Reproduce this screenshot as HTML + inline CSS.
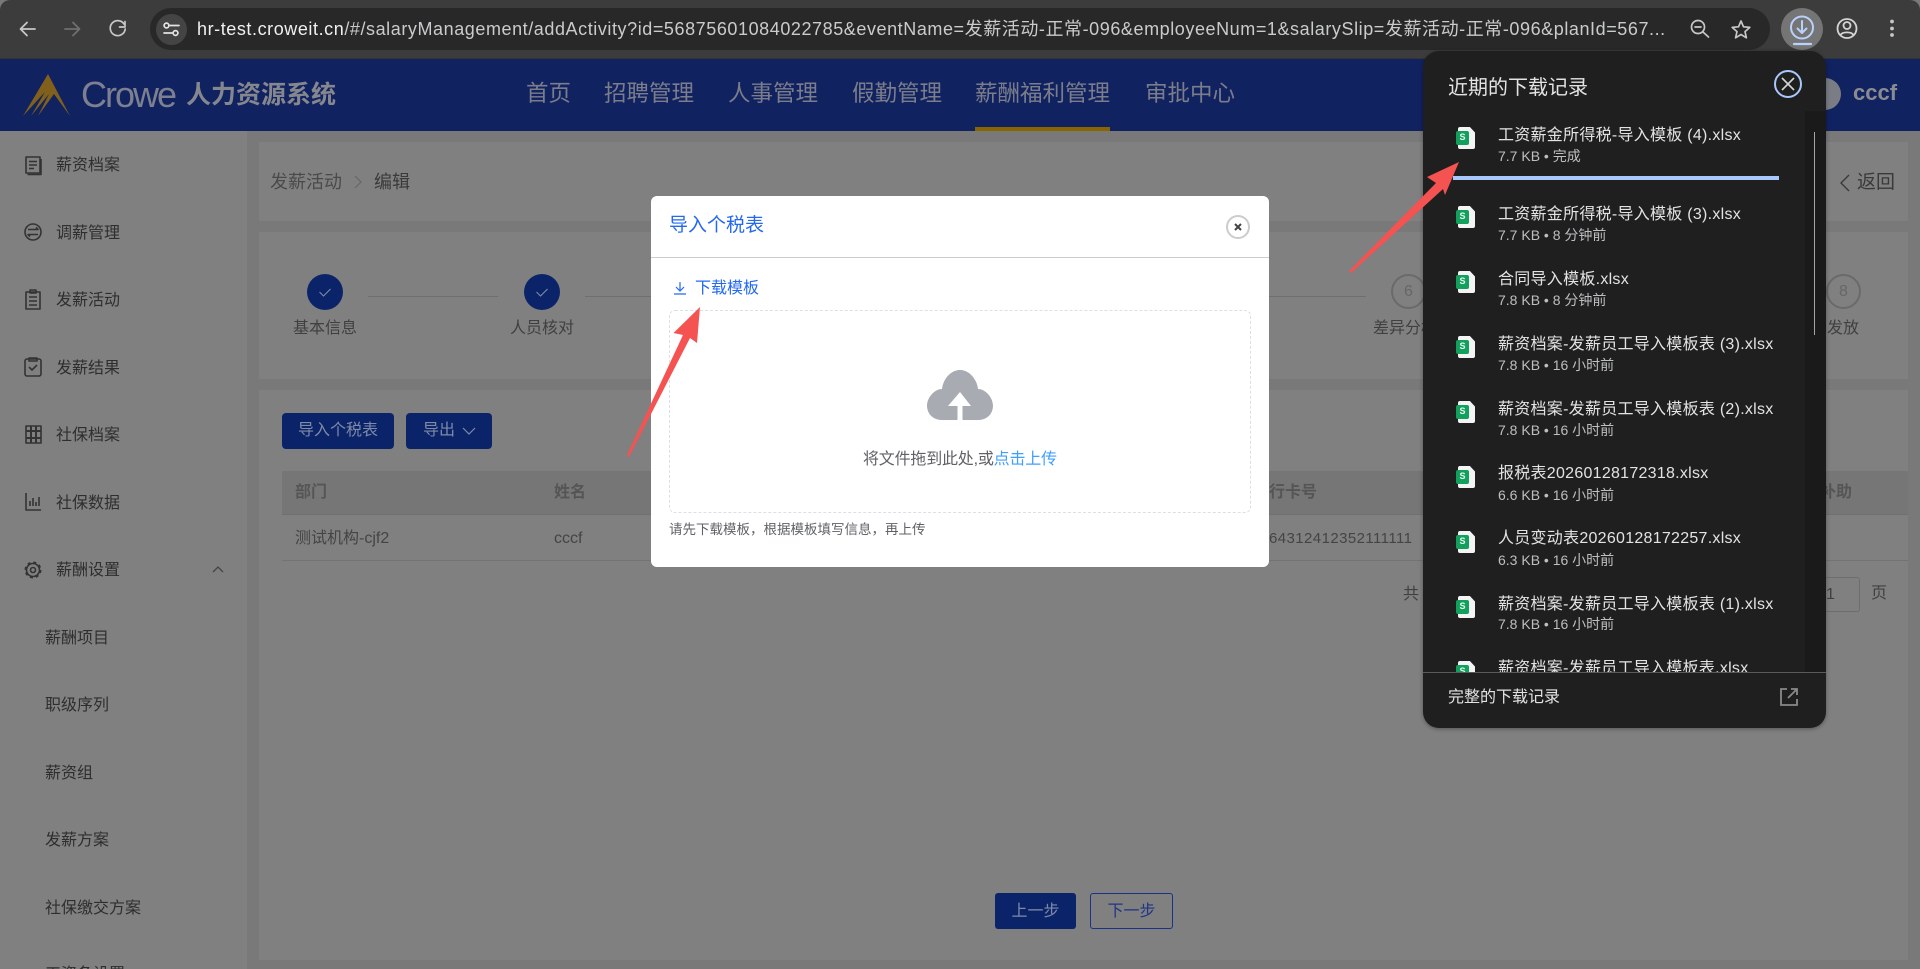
<!DOCTYPE html>
<html lang="zh-CN"><head><meta charset="utf-8"><title>发薪活动</title>
<style>
*{box-sizing:border-box;margin:0;padding:0}
html,body{width:1920px;height:969px;overflow:hidden;background:#797979;font-family:"Liberation Sans","Noto Sans CJK SC",sans-serif}
#root{position:absolute;left:0;top:0;width:1920px;height:969px;overflow:hidden;background:#797979}
.a{position:absolute}
.t{position:absolute;white-space:nowrap;line-height:24px;font-size:16px}
svg{position:absolute;display:block;overflow:visible}
.side{color:#2e2e2e}
.nav{color:#7b7d8b;font-size:22.5px;top:82px}
.card{position:absolute;background:#808080}
.dk{color:#404040}
.dl{color:#e3e3e3;font-size:16px;letter-spacing:.27px}
.ds{color:#bdbfc0;font-size:14px}
.doc{position:absolute;width:17px;height:22px;background:#f4f4f4;border-radius:2px;clip-path:polygon(0 0,70% 0,100% 25%,100% 100%,0 100%)}
.xl{position:absolute;width:13px;height:14px;background:#12a05c;border-radius:2px;color:#e8fff2;font-size:9px;font-weight:700;line-height:13px;text-align:center}
</style></head><body><div id="root">
<!-- toolbar -->
<div class="a" style="left:0;top:0;width:1920px;height:59px;background:#3c3c3c;border-bottom:1px solid #333;border-radius:10px 10px 0 0"></div>
<div class="a" style="left:150px;top:8px;width:1620px;height:42px;background:#282828;border-radius:21px"></div>
<div class="a" style="left:156px;top:14px;width:31px;height:31px;background:#444;border-radius:50%"></div>
<svg style="left:0;top:0" width="240" height="59" fill="none" stroke-linecap="round" stroke-linejoin="round">
<path d="M35 29H21M27 22.500l-6.500 6.500 6.500 6.500" stroke="#c7c7c7" stroke-width="1.800"/>
<path d="M65 29h14M73 22.500l6.500 6.500-6.500 6.500" stroke="#6f6f6f" stroke-width="1.800"/>
<path d="M124 24a7.500 7.500 0 1 0 1.200 5" stroke="#c7c7c7" stroke-width="1.700"/><path d="M125 21.500v5.500h-5.500" stroke="#c7c7c7" stroke-width="1.700"/>
<g stroke="#e3e3e3" stroke-width="1.700"><path d="M170 25.500h9M164 33h8"/><circle cx="166.500" cy="25.500" r="2.400"/><circle cx="175.500" cy="33" r="2.400"/></g>
</svg>
<div class="t" style="left:197px;top:14px;font-size:18px;letter-spacing:.57px;line-height:30px;color:#c9cbcc"><span style="color:#eef0f1">hr-test.croweit.cn</span>/#/salaryManagement/addActivity?id=56875601084022785&amp;eventName=发薪活动-正常-096&amp;employeeNum=1&amp;salarySlip=发薪活动-正常-096&amp;planId=567...</div>
<svg style="left:1680px;top:0" width="240" height="59" fill="none" stroke-linecap="round" stroke-linejoin="round">
<g stroke="#c7c7c7" stroke-width="1.700"><circle cx="18" cy="27" r="6.500"/><path d="M23 32l5.500 5M15 27h6"/></g>
<path d="M61 21l2.500 5.800 6.300.6-4.800 4.200 1.400 6.200-5.400-3.300-5.400 3.300 1.400-6.200-4.800-4.200 6.300-.6z" stroke="#c7c7c7" stroke-width="1.700"/>
<circle cx="122" cy="29" r="21" fill="#757575" stroke="none"/>
<circle cx="122" cy="27.500" r="11" stroke="#b9d2fb" stroke-width="2"/><path d="M122 21v12M117.500 28.500l4.500 4.500 4.500-4.500" stroke="#b9d2fb" stroke-width="2"/><path d="M114 44h17" stroke="#b9d2fb" stroke-width="2.200"/>
<g stroke="#d5d5d5" stroke-width="1.800"><circle cx="167" cy="28.500" r="9.500"/><circle cx="167" cy="25.500" r="3.500"/><path d="M160.500 35c2-3.500 11-3.500 13 0"/></g>
<g fill="#c7c7c7" stroke="none"><circle cx="212" cy="21.500" r="1.900"/><circle cx="212" cy="28.500" r="1.900"/><circle cx="212" cy="35" r="1.900"/></g>
</svg>
<!-- header -->
<div class="a" style="left:0;top:59px;width:1920px;height:72px;background:#112260"></div>
<svg style="left:23px;top:73px" width="48" height="44"><path d="M25 1L47 43 31 21 15 43 26 21 8 43 22 19 0 43z" fill="#80601a"/></svg>
<div class="t" style="left:81px;top:73px;font-size:36px;line-height:44px;color:#7d8090;letter-spacing:-2px">Crowe</div>
<div class="t" style="left:186px;top:80px;font-size:25px;line-height:30px;font-weight:700;color:#85878f">人力资源系统</div>
<div class="t nav" style="left:526px">首页</div>
<div class="t nav" style="left:604px">招聘管理</div>
<div class="t nav" style="left:728px">人事管理</div>
<div class="t nav" style="left:852px">假勤管理</div>
<div class="t nav" style="left:975px">薪酬福利管理</div>
<div class="t nav" style="left:1145px">审批中心</div>
<div class="a" style="left:975px;top:127px;width:135px;height:4px;background:#8a6400"></div>
<div class="a" style="left:1809px;top:78px;width:32px;height:32px;border-radius:50%;background:#7b7d85"></div>
<div class="t" style="left:1853px;top:81px;font-size:22px;font-weight:700;color:#8a8b90">cccf</div>
<!-- sidebar -->
<div class="a" style="left:0;top:131px;width:247px;height:838px;background:#808080"></div>
<svg style="left:0;top:131px" width="60" height="460" fill="none" stroke="#333" stroke-width="1.600" stroke-linejoin="round">
<rect x="26" y="26" width="14" height="16"/><path d="M29 30.500h8M29 34h8M29 37.500h5M41 28v15.500H27.500"/>
<circle cx="33" cy="101" r="8"/><path d="M28 98.500h10l-2-2M38 103.500H28l2 2"/>
<rect x="26" y="161" width="14" height="17"/><path d="M30 159h6v3h-6zM29 166h8M29 170h8M29 174h8"/>
<rect x="25" y="228" width="16" height="17" rx="2"/><path d="M29 227h8v3h-8zM29 236l3 3 5-5"/>
<rect x="26" y="295" width="15" height="17"/><path d="M31 295v17M36 295v17M26 300h15M26 307h15" stroke-width="2"/>
<path d="M26 362v17h15M30 375v-5M33 375v-8M36 375v-4M39 375v-9"/>
<circle cx="33" cy="439" r="6.500"/><circle cx="33" cy="439" r="7.500" stroke-width="2" stroke-dasharray="3 2.900"/><circle cx="33" cy="439" r="2.500"/>
</svg>
<div class="t side" style="left:56px;top:154px">薪资档案</div>
<div class="t side" style="left:56px;top:222px">调薪管理</div>
<div class="t side" style="left:56px;top:289px">发薪活动</div>
<div class="t side" style="left:56px;top:357px">发薪结果</div>
<div class="t side" style="left:56px;top:424px">社保档案</div>
<div class="t side" style="left:56px;top:492px">社保数据</div>
<div class="t side" style="left:56px;top:559px">薪酬设置</div>
<svg style="left:210px;top:562px" width="16" height="16" fill="none" stroke="#444" stroke-width="1.300"><path d="M3 10l5-5 5 5"/></svg>
<div class="t side" style="left:45px;top:627px">薪酬项目</div>
<div class="t side" style="left:45px;top:694px">职级序列</div>
<div class="t side" style="left:45px;top:762px">薪资组</div>
<div class="t side" style="left:45px;top:829px">发薪方案</div>
<div class="t side" style="left:45px;top:897px">社保缴交方案</div>
<div class="t side" style="left:45px;top:963px">工资条设置</div>
<!-- content cards -->
<div class="card" style="left:259px;top:142px;width:1649px;height:79px"></div>
<div class="card" style="left:259px;top:232px;width:1649px;height:147px"></div>
<div class="card" style="left:259px;top:390px;width:1649px;height:570px"></div>
<div class="t" style="left:270px;top:170px;font-size:18px;color:#4a4a4a">发薪活动</div>
<svg style="left:352px;top:174px" width="12" height="16" fill="none" stroke="#666" stroke-width="1.200"><path d="M3 2l6 6-6 6"/></svg>
<div class="t" style="left:374px;top:170px;font-size:18px;color:#3a3a3a">编辑</div>
<svg style="left:1838px;top:172px" width="14" height="22" fill="none" stroke="#3a3a3a" stroke-width="1.400"><path d="M11 3l-8 8 8 8"/></svg>
<div class="t" style="left:1857px;top:171px;font-size:19px;color:#3a3a3a">返回</div>
<!-- stepper -->
<div class="a" style="left:368px;top:296px;width:130px;height:1px;background:#6f6f6f"></div>
<div class="a" style="left:585px;top:296px;width:781px;height:1px;background:#6f6f6f"></div>
<svg style="left:300px;top:270px" width="300" height="44" fill="none"><circle cx="25" cy="22" r="18" fill="#0b2469"/><path d="M19.500 22l4 4 7-7" stroke="#7f8aa8" stroke-width="1.100"/><circle cx="242" cy="22" r="18" fill="#0b2469"/><path d="M236.500 22l4 4 7-7" stroke="#7f8aa8" stroke-width="1.100"/></svg>
<div class="t dk" style="left:293px;top:317px">基本信息</div>
<div class="t dk" style="left:510px;top:317px">人员核对</div>
<div class="a" style="left:1391px;top:274px;width:35px;height:35px;border:2px solid #6a6a6a;border-radius:50%;color:#666;font-size:16px;line-height:31px;text-align:center">6</div>
<div class="t dk" style="left:1373px;top:317px">差异分析</div>
<div class="a" style="left:1826px;top:274px;width:35px;height:35px;border:2px solid #6a6a6a;border-radius:50%;color:#666;font-size:16px;line-height:31px;text-align:center">8</div>
<div class="t dk" style="left:1827px;top:317px">发放</div>
<!-- table area -->
<div class="a" style="left:282px;top:413px;width:112px;height:36px;background:#0b2469;border-radius:4px;color:#7f8aa8;font-size:16px;line-height:36px;text-align:center">导入个税表</div>
<div class="a" style="left:406px;top:413px;width:86px;height:36px;background:#0b2469;border-radius:4px;color:#7f8aa8;font-size:16px;line-height:36px;padding-left:17px">导出</div>
<svg style="left:461px;top:423px" width="16" height="16" fill="none" stroke="#7f8aa8" stroke-width="1.200"><path d="M2 5l6 6 6-6"/></svg>
<div class="a" style="left:282px;top:471px;width:1626px;height:44px;background:#767676;border-bottom:1px solid #707070"></div>
<div class="t" style="left:295px;top:481px;font-weight:700;color:#555;font-size:16px">部门</div>
<div class="t" style="left:554px;top:481px;font-weight:700;color:#555">姓名</div>
<div class="t" style="left:1269px;top:481px;font-weight:700;color:#555">行卡号</div>
<div class="t" style="left:1820px;top:481px;font-weight:700;color:#555">补助</div>
<div class="t" style="left:295px;top:527px;color:#444">测试机构-cjf2</div>
<div class="t" style="left:554px;top:527px;color:#444">cccf</div>
<div class="t" style="left:1269px;top:527px;font-size:15px;letter-spacing:.42px;color:#444">64312412352111111</div>
<div class="a" style="left:282px;top:560px;width:1626px;height:1px;background:#737373"></div>
<div class="t dk" style="left:1403px;top:583px">共</div>
<div class="a" style="left:1800px;top:577px;width:60px;height:35px;border:1px solid #6e6e6e;border-radius:3px"></div>
<div class="t dk" style="left:1826px;top:583px">1</div>
<div class="t dk" style="left:1871px;top:582px">页</div>
<div class="a" style="left:995px;top:893px;width:81px;height:36px;background:#0b2469;border-radius:3px;color:#7f8aa8;font-size:16px;line-height:38px;text-align:center">上一步</div>
<div class="a" style="left:1090px;top:893px;width:83px;height:36px;border:1px solid #1a3388;border-radius:3px;color:#1f3585;font-size:16px;line-height:36px;text-align:center">下一步</div>
<!-- modal -->
<div class="a" style="left:651px;top:196px;width:618px;height:371px;background:#fff;border-radius:6px"></div>
<div class="t" style="left:669px;top:212px;font-size:19px;line-height:28px;color:#2468f2">导入个税表</div>
<div class="a" style="left:1226px;top:214.500px;width:24px;height:24px;border:2px solid #ccc;border-radius:50%"></div>
<svg style="left:1232px;top:220.500px" width="12" height="12" fill="none" stroke="#444" stroke-width="2"><path d="M3 3l6 6M9 3l-6 6"/></svg>
<div class="a" style="left:651px;top:257px;width:618px;height:1px;background:#ccc"></div>
<svg style="left:673px;top:281px" width="14" height="14" fill="none" stroke="#2468f2" stroke-width="1.200"><path d="M7 1v8M3 6l4 4 4-4M1 13h12"/></svg>
<div class="t" style="left:695px;top:277px;color:#2468f2">下载模板</div>
<div class="a" style="left:669px;top:310px;width:582px;height:203px;border:1px dashed #dcdfe6;border-radius:6px"></div>
<svg style="left:927px;top:370px" width="66" height="50"><path d="M14 50A14 14 0 0 1 0 36C0 27 8 19 15 19 16 9 24 0 33 0S50 9 51 19C58 19 66 27 66 36A14 14 0 0 1 52 50z" fill="#a8abb2"/><path d="M33 22L44 36H35.500V50H30.500V36H21z" fill="#fff"/></svg>
<div class="t" style="left:863px;top:448px;letter-spacing:-.2px;color:#606266">将文件拖到此处,或<span style="color:#409eff">点击上传</span></div>
<div class="t" style="left:669px;top:518px;font-size:13.500px;color:#606266">请先下载模板，根据模板填写信息，再上传</div>
<!-- download panel -->
<div class="a" style="left:1423px;top:51px;width:403px;height:677px;background:#1f1f1f;border-radius:16px;box-shadow:0 1px 4px rgba(0,0,0,.35);overflow:hidden">
<div class="a" style="left:382px;top:60px;width:21px;height:561px;background:#1a1a1a"></div>
<div class="a" style="left:391px;top:81px;width:1px;height:203px;background:#a5a5a5"></div>
<div class="a" style="left:0;top:621px;width:403px;height:1px;background:#5a5a5a"></div>
</div>
<div class="t" style="left:1448px;top:74px;font-size:20px;line-height:28px;color:#e3e3e3">近期的下载记录</div>
<svg style="left:1773px;top:69px" width="30" height="30" fill="none"><circle cx="15" cy="15" r="13" stroke="#a8c7fa" stroke-width="2"/><path d="M9 9l12 12M21 9L9 21" stroke="#d5d5d5" stroke-width="1.600"/></svg>
<div class="a" style="left:1453px;top:176px;width:326px;height:3.500px;background:#a8c7fa"></div>

<div class="doc" style="left:1458px;top:127px"></div><div class="xl" style="left:1456px;top:131px">S</div>
<div class="t dl" style="left:1498px;top:124px">工资薪金所得税-导入模板 (4).xlsx</div>
<div class="t ds" style="left:1498px;top:144px">7.7 KB • 完成</div>

<div class="doc" style="left:1458px;top:206px"></div><div class="xl" style="left:1456px;top:210px">S</div>
<div class="t dl" style="left:1498px;top:203px">工资薪金所得税-导入模板 (3).xlsx</div>
<div class="t ds" style="left:1498px;top:223px">7.7 KB • 8 分钟前</div>

<div class="doc" style="left:1458px;top:271px"></div><div class="xl" style="left:1456px;top:275px">S</div>
<div class="t dl" style="left:1498px;top:268px">合同导入模板.xlsx</div>
<div class="t ds" style="left:1498px;top:288px">7.8 KB • 8 分钟前</div>

<div class="doc" style="left:1458px;top:336px"></div><div class="xl" style="left:1456px;top:340px">S</div>
<div class="t dl" style="left:1498px;top:333px">薪资档案-发薪员工导入模板表 (3).xlsx</div>
<div class="t ds" style="left:1498px;top:353px">7.8 KB • 16 小时前</div>

<div class="doc" style="left:1458px;top:401px"></div><div class="xl" style="left:1456px;top:405px">S</div>
<div class="t dl" style="left:1498px;top:398px">薪资档案-发薪员工导入模板表 (2).xlsx</div>
<div class="t ds" style="left:1498px;top:418px">7.8 KB • 16 小时前</div>

<div class="doc" style="left:1458px;top:466px"></div><div class="xl" style="left:1456px;top:470px">S</div>
<div class="t dl" style="left:1498px;top:462px">报税表20260128172318.xlsx</div>
<div class="t ds" style="left:1498px;top:483px">6.6 KB • 16 小时前</div>

<div class="doc" style="left:1458px;top:531px"></div><div class="xl" style="left:1456px;top:535px">S</div>
<div class="t dl" style="left:1498px;top:527px">人员变动表20260128172257.xlsx</div>
<div class="t ds" style="left:1498px;top:548px">6.3 KB • 16 小时前</div>

<div class="doc" style="left:1458px;top:596px"></div><div class="xl" style="left:1456px;top:600px">S</div>
<div class="t dl" style="left:1498px;top:593px">薪资档案-发薪员工导入模板表 (1).xlsx</div>
<div class="t ds" style="left:1498px;top:612px">7.8 KB • 16 小时前</div>

<div class="a" style="left:1450px;top:655px;width:360px;height:17px;overflow:hidden">
<div class="doc" style="left:8px;top:6px"></div><div class="xl" style="left:6px;top:10px">S</div>
<div class="t dl" style="left:48px;top:2px">薪资档案-发薪员工导入模板表.xlsx</div>
</div>
<div class="t" style="left:1448px;top:686px;color:#e3e3e3">完整的下载记录</div>
<svg style="left:1779px;top:687px" width="20" height="20" fill="none" stroke="#8a8a8a" stroke-width="1.800"><path d="M8 2H2v16h16v-6M12 2h6v6M18 2L9 11"/></svg>
<!-- red annotation arrows -->
<svg style="left:0;top:0" width="1920" height="969">
<path d="M1459 162L1427 177 1436 183 1349 271 1351 273 1443 189 1445 195z" fill="#f55252"/>
<path d="M700 307L673.500 333 683 335 627 455 629 457 690 338 697 343z" fill="#f55252"/>
</svg>
</div></body></html>
